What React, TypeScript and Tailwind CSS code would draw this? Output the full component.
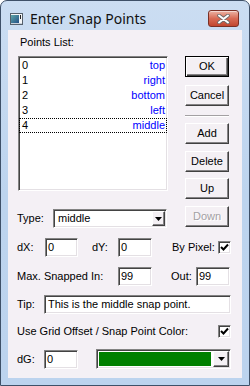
import React from "react";

const sunken =
  "border border-t-[#838383] border-l-[#838383] border-r-white border-b-white shadow-[inset_1px_1px_0_#434343,inset_-1px_-1px_0_#e4e0e4]";
const raised =
  "border border-t-white border-l-white border-r-[#404040] border-b-[#404040] shadow-[inset_-1px_-1px_0_#858385]";

function Button({ label, primary, disabled, className = "" }: { label: string; primary?: boolean; disabled?: boolean; className?: string }) {
  const frame = primary
    ? "border border-black shadow-[inset_1px_1px_0_#fff,inset_-1px_-1px_0_#404040,inset_-2px_-2px_0_#858385]"
    : raised;
  return (
    <div
      className={`w-[44px] h-[21px] flex items-center justify-center bg-[#f4f0f4] ${frame} ${
        disabled ? "text-[#a3a0a3] [text-shadow:1px_1px_0_#ffffff]" : "text-black"
      } ${className}`}
    >
      {label}
    </div>
  );
}

function Arrow() {
  return (
    <svg width="7" height="4" viewBox="0 0 7 4">
      <path d="M0 0 H7 L3.5 4 Z" fill="#000" />
    </svg>
  );
}

function DropButton({ w = 13 }: { w?: number }) {
  return (
    <div
      className={`h-full flex items-center justify-center bg-[#f4f0f4] ${raised} ${w === 13 ? "w-[13px]" : "w-[16px]"}`}
    >
      <Arrow />
    </div>
  );
}

function Check() {
  return (
    <div className={`w-[13px] h-[13px] bg-white flex items-center justify-center ${sunken}`}>
      <svg width="9" height="9" viewBox="0 0 9 9">
        <path d="M1 4 L3.5 6.5 L8 1.5" stroke="#000" strokeWidth="2" fill="none" />
      </svg>
    </div>
  );
}

function Field({ value, className = "" }: { value: string; className?: string }) {
  return (
    <div className={`h-[19px] bg-white flex items-center pl-[2px] ${sunken} ${className}`}>
      {value}
    </div>
  );
}

export default function App() {
  const points = [
    ["0", "top"],
    ["1", "right"],
    ["2", "bottom"],
    ["3", "left"],
    ["4", "middle"],
  ];

  return (
    <div className="w-[250px] h-[386px] flex flex-col rounded-t-[7px] border border-[#3e5068] bg-gradient-to-b from-[#cbddf2] via-[#bdd4ee] to-[#bcd3ee] overflow-hidden">
      {/* Title bar */}
      <div className="h-[29px] pt-[6px] pl-[9px] pr-[10px] flex items-center">
        <svg width="13" height="12" viewBox="0 0 13 12">
          <defs>
            <linearGradient id="ig" x1="0" y1="0" x2="1" y2="1">
              <stop offset="0" stopColor="#5ea6a8" />
              <stop offset="1" stopColor="#234f86" />
            </linearGradient>
          </defs>
          <rect x="0.5" y="0.5" width="12" height="11" fill="#f4f6f8" stroke="#55606c" />
          <rect x="1" y="2" width="8" height="8" fill="url(#ig)" />
          <rect x="10" y="2" width="1" height="4" fill="#222" />
          <rect x="1" y="10" width="11" height="1" fill="#c9d2dc" />
        </svg>
        <span className="ml-[7px] text-[14px] text-[#111] font-['Noto_Sans',sans-serif] leading-none">
          Enter Snap Points
        </span>
        <div className="ml-auto w-[31px] h-[17px] rounded-[3px] border border-[#7a3025] bg-gradient-to-b from-[#eab3a5] via-[#d86b55] to-[#c1462f] shadow-[inset_0_1px_0_rgba(255,255,255,0.5)] flex items-center justify-center">
          <svg width="13" height="10" viewBox="0 0 13 10">
            <path d="M2 1.5 L11 8.5 M11 1.5 L2 8.5" stroke="#6b6b6b" strokeWidth="3.6" strokeLinecap="round" />
            <path d="M2 1.5 L11 8.5 M11 1.5 L2 8.5" stroke="#ffffff" strokeWidth="2" strokeLinecap="round" />
          </svg>
        </div>
      </div>

      {/* Client area */}
      <div className="mx-[7px] h-[348px] bg-[#f4f0f5] flex flex-col text-[11px] text-black font-['Liberation_Sans',Arial,sans-serif] leading-none">
        <div className="flex h-[198px]">
          <div className="ml-[9px] w-[151px] flex flex-col">
            <div className="h-[26px] flex items-center pl-[3px]">Points List:</div>
            <div className={`ml-[1px] w-[150px] h-[136px] bg-white ${sunken} pt-[1px]`}>
              {points.map(([n, name], i) => (
                <div
                  key={n}
                  className={`h-[15px] flex items-center justify-between pl-[2px] pr-[1px] border ${
                    i === 4 ? "border-dotted border-black" : "border-transparent"
                  }`}
                >
                  <span>{n}</span>
                  <span className="text-[#0000ff]">{name}</span>
                </div>
              ))}
            </div>
            <div className="mt-[18px] h-[19px] flex items-center">
              <span className="w-[36px]">Type:</span>
              <div className={`w-[114px] h-[19px] bg-white flex items-center p-[1px] ${sunken}`}>
                <span className="flex-1 pl-[3px]">middle</span>
                <DropButton />
              </div>
            </div>
          </div>

          <div className="ml-[17px] w-[44px] flex flex-col">
            <Button label="OK" primary className="mt-[26px]" />
            <Button label="Cancel" className="mt-[8px]" />
            <div className="mt-[9px] h-[2px] border-t border-t-[#a3a0a3] border-b border-b-white" />
            <Button label="Add" className="mt-[6px]" />
            <Button label="Delete" className="mt-[7px]" />
            <Button label="Up" className="mt-[6px]" />
            <Button label="Down" disabled className="mt-[7px]" />
          </div>
        </div>

        {/* dX / dY / By Pixel */}
        <div className="mt-[10px] h-[19px] pl-[9px] flex items-center">
          <span className="w-[28px]">dX:</span>
          <Field value="0" className="w-[33px]" />
          <span className="ml-[14px] w-[26px]">dY:</span>
          <Field value="0" className="w-[34px]" />
          <span className="ml-[20px] w-[46px]">By Pixel:</span>
          <Check />
        </div>

        {/* Max snapped */}
        <div className="mt-[10px] h-[19px] pl-[9px] flex items-center">
          <span className="w-[101px]">Max. Snapped In:</span>
          <Field value="99" className="w-[34px]" />
          <span className="ml-[19px] w-[25px]">Out:</span>
          <Field value="99" className="w-[34px]" />
        </div>

        {/* Tip */}
        <div className="mt-[9px] h-[19px] pl-[9px] flex items-center">
          <span className="w-[27px]">Tip:</span>
          <Field value="This is the middle snap point." className="w-[187px] pl-[3px]" />
        </div>

        {/* Grid offset */}
        <div className="mt-[11px] h-[13px] pl-[9px] flex items-center">
          <span className="w-[201px]">Use Grid Offset / Snap Point Color:</span>
          <Check />
        </div>

        {/* dG / colour */}
        <div className="mt-[11px] h-[20px] pl-[9px] flex items-center">
          <span className="w-[27px]">dG:</span>
          <Field value="0" className="w-[34px]" />
          <div className={`ml-[18px] w-[135px] h-[20px] bg-white flex items-stretch p-[1px] ${sunken}`}>
            <div className="flex-1 m-[1px] mr-[2px] bg-[#008000]" />
            <DropButton w={16} />
          </div>
        </div>
      </div>
    </div>
  );
}
